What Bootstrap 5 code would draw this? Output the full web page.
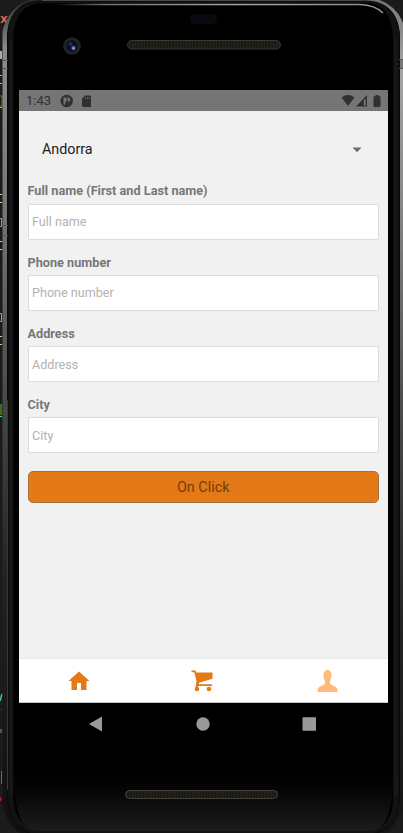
<!DOCTYPE html>
<html lang="en">
<head>
<meta charset="utf-8">
<meta name="viewport" content="width=device-width, initial-scale=1">
<title>Shipping form</title>
<link href="https://cdn.jsdelivr.net/npm/bootstrap@5.3.0/dist/css/bootstrap.min.css" rel="stylesheet">
<style>
body{font-family:Roboto,"Liberation Sans",sans-serif;background:#1a1a1a}
.stage{width:403px;height:833px}
.frame-art{left:0;top:0;z-index:0}
.device{z-index:1;padding:0 15px 0 19px;height:833px}
.bezel-top{height:90px}
.app-screen{height:613px;background:#f1f1f1}
.status{height:21px;background:#757575;color:#303030;font-size:13px;line-height:21px;padding:0 7px}
.picker{height:76px;padding:1px 26px 0 23px;font-size:14.3px;color:#222}
.fields{padding:0 9px 0 8.5px;margin-top:-3.6px}
.fields label{font-size:12.7px;font-weight:700;color:#777;line-height:16px;height:16px;margin:0 0 4.1px}
.fields .form-control{height:36px;border:1px solid #dcdcdc;border-radius:2px;padding:0 3.5px;font-size:12.6px;color:#333;background:#fff}
.fields .form-control::placeholder{color:#b2b2b2;opacity:1}
.field-row{height:71.3px}
.btn-order{height:32px;background:#e47917;border:1px solid #a8703c;border-radius:5px;color:#733d0c;font-size:14.4px;line-height:32px;padding:0;margin-top:2.5px}
.tabs{height:45px;background:#fff;border-top:1px solid #e8e8e8;border-bottom:1px solid #c9c9c9}
.sysnav{height:43px}
</style>
<script src="https://cdn.jsdelivr.net/npm/bootstrap@5.3.0/dist/js/bootstrap.bundle.min.js"></script>
</head>
<body>
<div class="stage position-relative overflow-hidden">
<svg class="frame-art position-absolute" width="403" height="833" viewBox="0 0 403 833" aria-hidden="true">
  <defs>
    <linearGradient id="rimL" x1="0" y1="0" x2="0" y2="833" gradientUnits="userSpaceOnUse"><stop offset="0" stop-color="#333"/><stop offset=".06" stop-color="#8c8c8c"/><stop offset=".24" stop-color="#777"/><stop offset=".5" stop-color="#454545"/><stop offset=".7" stop-color="#222"/><stop offset="1" stop-color="#101010"/></linearGradient>
    <linearGradient id="rimR" x1="0" y1="0" x2="0" y2="833" gradientUnits="userSpaceOnUse"><stop offset="0" stop-color="#777"/><stop offset=".08" stop-color="#a5a5a5"/><stop offset=".24" stop-color="#888"/><stop offset=".5" stop-color="#4a4a4a"/><stop offset=".75" stop-color="#242424"/><stop offset="1" stop-color="#151515"/></linearGradient>
    <linearGradient id="shine" x1="55" x2="385" y1="0" y2="0" gradientUnits="userSpaceOnUse"><stop offset="0" stop-color="#000"/><stop offset=".15" stop-color="#6d7474"/><stop offset=".55" stop-color="#a4acaa"/><stop offset="1" stop-color="#889090"/></linearGradient>
    <linearGradient id="chin" x1="0" x2="0" y1="0" y2="1"><stop offset="0" stop-color="#000"/><stop offset=".35" stop-color="#050505"/><stop offset="1" stop-color="#1c1c1c"/></linearGradient>
    <pattern id="mesh" width="3" height="9" patternUnits="userSpaceOnUse"><rect width="3" height="9" fill="#1a1815"/><rect width="1.300" height="9" fill="#26231f"/></pattern>
  </defs>
  <rect width="403" height="833" fill="#1b1b1b"/>
  <text x="0" y="23" font-family="Liberation Mono" font-size="13" font-weight="700" fill="#f06a50">x</text>
  <g fill="none" stroke-width="1">
    <path d="M0 75.500H2M0 83.500H2M0 107.500H2" stroke="#92bfe8"/><path d="M0 96H2V106H0" stroke="#77761b"/>
    <path d="M0 194.500H2M0 202.500H2M0 241.500H2M0 249.500H2M0 336.500H2M0 344.500H2" stroke="#c9d19b"/>
    <path d="M0 218.500H1.500V226.500H0M0 313.500H1.500V321.500H0" stroke="#60b5ca"/><path d="M1 404V415" stroke="#39701c" stroke-width="2"/><path d="M0 416.500H2" stroke="#4ed0c0"/><path d="M1.500 771V784" stroke="#2a7ba5"/><path d="M1 51V59" stroke="#aaa" stroke-width="2"/><path d="M0 709.500H2" stroke="#333"/><path d="M1 729V733" stroke="#a08a60"/>
    <path d="M0 701L2 694" stroke="#36c79b" stroke-width="1.500"/><path d="M0 797.500Q2 799 0 801" stroke="#d33"/>
  </g>
  <path d="M37-1C20 0 6 14 2.500 32V799C4 819 13 832 31 839H375C392 832 402 818 403 799V30C399 12 387-1 368-1Z" fill="url(#rimL)"/>
  <path d="M200-2H372Q403 0 406 40V795Q403 822 385 835H200Z" fill="url(#rimR)"/>
  <path d="M372-2Q394 2 403 22V0H384Z" fill="#1b1b1b"/>
  <path d="M38 1C19 1.500 9 15 7.500 34V798C9 818 17 831 34 834H372C391 831 399 818 399.500 798V34C397.500 12 386 1.500 366 1Z" fill="#121212" stroke="#080808"/>
  <path d="M40 3C22 5 14 18 13.500 36V798C14 816 23 829 40 831H368C386 829 393 816 393 798V36C391 14 383 3 366 3Z" fill="#000"/>
  <path d="M14 768C14 817 22 831 40 831H368C386 831 393 814 393 768Z" fill="url(#chin)"/>
  <path d="M396 40V795M11 40V795" stroke="#202020"/>
  <path d="M7.500 400V790" stroke="#383838"/>
  <path d="M42 .500H362" stroke="#444b49"/>
  <path d="M55 4.500H360Q375 5 383 13" fill="none" stroke="url(#shine)" stroke-width="1.700"/>
  <path d="M3 60.500H8M3 68.500H8M3 225.500H8M3 235.500H8M399 59.500H403M399 68.500H403" stroke="#555"/>
  <rect x="400" y="60" width="3" height="8" fill="#76767b"/>
  <rect x="190" y="14" width="27" height="10" rx="5" fill="#090a0f"/>
  <g><circle cx="72" cy="46" r="8.800" fill="#222224"/><circle cx="72" cy="46" r="5.700" fill="#0b0e20"/><circle cx="70.500" cy="44" r="2" fill="#1d2d5e"/><circle cx="73.500" cy="48" r="2.200" fill="#4353ae"/><circle cx="73.500" cy="48.300" r="1" fill="#a3b8ff"/></g>
  <rect x="127.500" y="40.500" width="153" height="8.500" rx="4.200" fill="url(#mesh)" stroke="#3b3833"/>
  <rect x="125.500" y="790.500" width="152" height="8" rx="4" fill="url(#mesh)" stroke="#45423d"/>
</svg>
<div class="device position-relative">
  <div class="bezel-top"></div>
  <main class="app-screen d-flex flex-column">
    <div class="status d-flex align-items-center">
      <span>1:43</span>
      <svg class="ms-2" width="34" height="14" viewBox="0 0 34 14"><circle cx="7.700" cy="7" r="6.200" fill="#303030"/><path d="M4.500 3.500H7.500V7.500H6.300V10.500H4.500ZM8.600 3.500H10.300Q12 5.500 10.300 7.500H8.600Z" fill="#757575"/><path d="M26 1.500H31Q32 1.500 32 2.500V12Q32 13 31 13H24Q23 13 23 12V4.500Z" fill="#303030"/><path d="M26.500 3V5M28.500 3V5M30.300 3V5" stroke="#757575" stroke-width=".7"/></svg>
      <svg class="ms-auto" width="40" height="14" viewBox="0 0 40 14" fill="#303030"><path d="M.500 3.500Q7-1.300 13.500 3.500L7 12Z"/><path d="M15 12.500L26 1V12.500Z"/><path d="M22.800 6.500L24.800 4.500V11.500H22.800Z" fill="#757575"/><path d="M34.500 1H37.500V2.200H39.500V12Q39.500 13 38.500 13H33.500Q32.500 13 32.500 12V2.200H34.500Z"/></svg>
    </div>
    <div class="picker d-flex align-items-center justify-content-between"><span>Andorra</span><svg width="10" height="6" viewBox="0 0 10 6"><path d="M.5.500H9.500L5 5.200Z" fill="#6d6d6d"/></svg></div>
    <form class="fields flex-grow-1">
      <div class="field-row"><label class="d-block" for="full">Full name (First and Last name)</label><input class="form-control shadow-none" id="full" placeholder="Full name"></div>
      <div class="field-row"><label class="d-block" for="phone">Phone number</label><input class="form-control shadow-none" id="phone" placeholder="Phone number"></div>
      <div class="field-row"><label class="d-block" for="addr">Address</label><input class="form-control shadow-none" id="addr" placeholder="Address"></div>
      <div class="field-row"><label class="d-block" for="city">City</label><input class="form-control shadow-none" id="city" placeholder="City"></div>
      <button type="button" class="btn btn-order d-block w-100">On Click</button>
    </form>
    <nav class="tabs row g-0 align-items-center text-center">
      <div class="col pe-1"><svg width="22" height="20" viewBox="0 0 22 20"><path d="M11 .5L21.500 10H18.500V19H13V12H9V19H3.500V10H.5Z" fill="#e47917"/></svg></div>
      <div class="col pe-1"><svg width="24" height="24" viewBox="0 0 24 24" fill="#e47917"><path d="M.500 1.500H4.500L5.200 3.500H21.500V9.800L8 13.700V15.300H21V17H7L7.500 19H4.500L5.500 12L3.300 3.200H.500Z"/><circle cx="6" cy="20" r="2.300"/><circle cx="18" cy="20" r="2.300"/></svg></div>
      <div class="col"><svg width="22" height="24" viewBox="0 0 22 24"><path d="M10.500 .8C13 1.500 14.800 3 14.500 6C14.500 9 13.500 10 13 12V14.500C14.500 17 20.500 17 20.500 21V23H.500V21C.500 17 6.500 17 8 14.500V12C6.500 10 6.500 8 6.500 6C6.200 3 8 1.500 10.500 .8Z" fill="#ffbb7c"/></svg></div>
    </nav>
  </main>
  <div class="sysnav row g-0 align-items-center text-center" aria-label="System navigation">
    <svg width="369" height="43" viewBox="0 0 369 43" fill="#999"><path d="M70 21L83 13.500V28.500Z"/><circle cx="184" cy="21" r="6.700"/><rect x="283.500" y="14.300" width="13.500" height="13.500" rx=".7"/></svg>
  </div>
</div>
</div>
</body>
</html>
